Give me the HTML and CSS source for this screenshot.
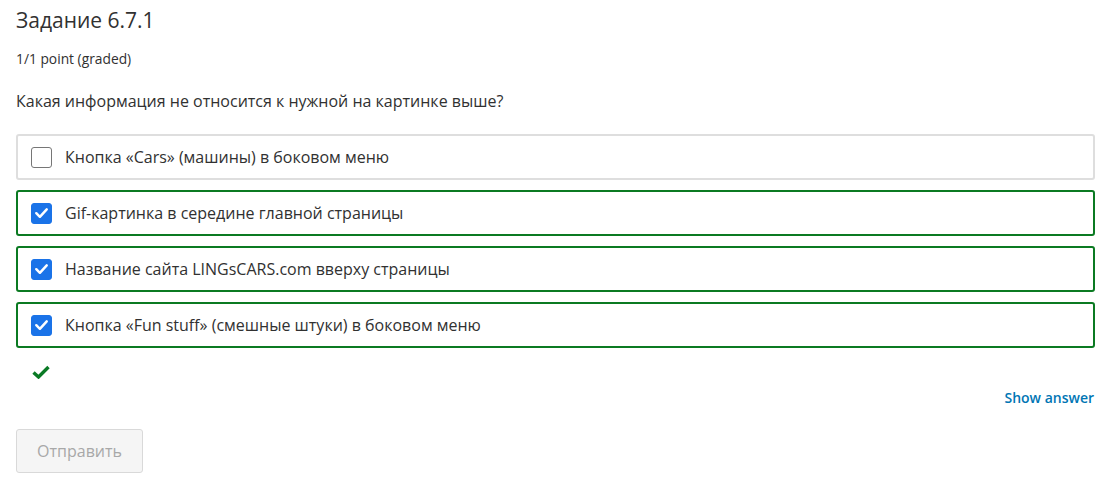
FILE: index.html
```html
<!DOCTYPE html>
<html lang="ru">
<head>
<meta charset="utf-8">
<link rel="stylesheet" href="styles.css">
</head>
<body>
<div class="problem">
  <h3 class="title">Задание 6.7.1</h3>
  <div class="points">1/1 point (graded)</div>
  <p class="question">Какая информация не относится к нужной на картинке выше?</p>
  <div class="choices">
    <label class="choice">
      <span class="box"></span>
      <span class="label">Кнопка «Cars» (машины) в боковом меню</span>
    </label>
    <label class="choice correct">
      <span class="box checked"><svg viewBox="0 0 20 20"><path d="M4.5 10.2 L8.3 14 L15.5 6.2" fill="none" stroke="#fff" stroke-width="2.6" stroke-linecap="round" stroke-linejoin="round"/></svg></span>
      <span class="label">Gif-картинка в середине главной страницы</span>
    </label>
    <label class="choice correct">
      <span class="box checked"><svg viewBox="0 0 20 20"><path d="M4.5 10.2 L8.3 14 L15.5 6.2" fill="none" stroke="#fff" stroke-width="2.6" stroke-linecap="round" stroke-linejoin="round"/></svg></span>
      <span class="label">Название сайта LINGsCARS.com вверху страницы</span>
    </label>
    <label class="choice correct">
      <span class="box checked"><svg viewBox="0 0 20 20"><path d="M4.5 10.2 L8.3 14 L15.5 6.2" fill="none" stroke="#fff" stroke-width="2.6" stroke-linecap="round" stroke-linejoin="round"/></svg></span>
      <span class="label">Кнопка «Fun stuff» (смешные штуки) в боковом меню</span>
    </label>
  </div>
  <div class="status"><svg viewBox="0 0 18 14" width="18" height="14"><path d="M1.5 7.5 L6.5 12 L16.5 2" fill="none" stroke="#0a7a25" stroke-width="3.4" stroke-linejoin="miter"/></svg></div>
  <div class="actions-right"><button class="show-answer">Show answer</button></div>
  <div class="actions"><button class="submit" disabled>Отправить</button></div>
</div>
</body>
</html>
```
FILE: styles.css
```css
html, body {
  margin: 0;
  padding: 0;
  background: #fff;
}
body {
  font-family: "Open Sans", "Noto Sans", sans-serif;
  color: #313131;
}
.problem {
  padding: 0 14px 0 16px;
}
.title {
  margin: 0;
  padding-top: 5px;
  font-size: 21px;
  font-weight: 400;
  line-height: 30px;
  color: #313131;
}
.points {
  margin-top: 15px;
  font-size: 13.8px;
  line-height: 18px;
  color: #313131;
}
.question {
  margin: 22px 0 0;
  font-size: 16px;
  line-height: 22px;
}
.choices {
  margin-top: 22px;
  display: flex;
  flex-direction: column;
  gap: 10px;
}
.choice {
  display: flex;
  align-items: center;
  height: 46px;
  box-sizing: border-box;
  border: 2px solid #dedede;
  border-radius: 3px;
  padding-left: 13px;
  font-size: 16px;
}
.choice.correct {
  border-color: #0b7a22;
}
.box {
  width: 21px;
  height: 21px;
  box-sizing: border-box;
  border: 1px solid #767676;
  border-radius: 3px;
  margin-right: 13px;
  display: flex;
  align-items: center;
  justify-content: center;
  flex-shrink: 0;
}
.box.checked {
  background: #1a73e8;
  border-color: #1a73e8;
}
.box svg {
  width: 20px;
  height: 20px;
}
.label {
  color: #313131;
}
.status {
  padding-left: 16px;
  padding-top: 17px;
  box-sizing: border-box;
  height: 34px;
}
.status svg {
  display: block;
}
.actions-right {
  display: flex;
  justify-content: flex-end;
  margin-top: 6px;
}
.show-answer {
  background: none;
  border: none;
  padding: 0 1px 0 0;
  font-family: inherit;
  font-size: 14px;
  font-weight: 600;
  color: #0075b4;
  line-height: 20px;
}
.actions {
  margin-top: 21px;
}
.submit {
  width: 127px;
  height: 44px;
  background: #f5f5f5;
  border: 1px solid #d9d9d9;
  border-radius: 3px;
  font-family: inherit;
  font-size: 16px;
  color: #a8a8a8;
}
```
